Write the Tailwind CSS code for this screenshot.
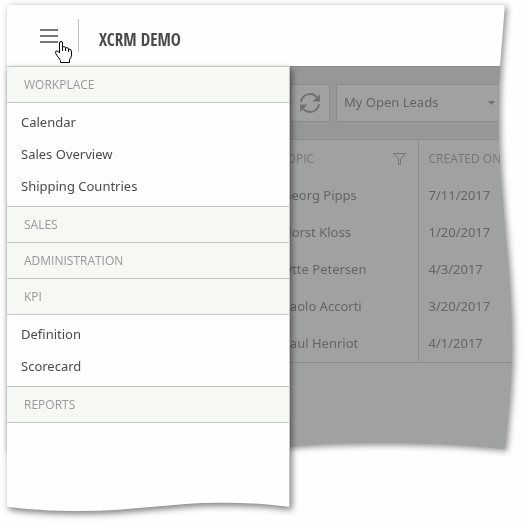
<!DOCTYPE html>
<html lang="en">
  <head>
    <meta charset="UTF-8" />
    <meta name="viewport" content="width=device-width, initial-scale=1.0" />
    <title>XCRM Demo</title>
    <script src="https://cdn.jsdelivr.net/npm/@tailwindcss/browser@4"></script>
  </head>

  <body class="bg-[#fefffd] font-['Noto_Sans','Open_Sans',sans-serif] text-[13px]">
    <!-- torn paper edges, in fractions of the clipped box -->
    <svg class="absolute" width="0" height="0" aria-hidden="true">
      <clipPath id="tornScreen" clipPathUnits="objectBoundingBox">
        <path d="M0 0H.984C.979 .08 .971 .16 .971 .24C.971 .42 .998 .58 .998 .762C.998 .85 .99 .92 .984 .996C.9 .985 .82 .982 .737 .982C.65 .982 .6 .985 .559 .99L0 1Z" />
      </clipPath>
      <clipPath id="tornMenu" clipPathUnits="objectBoundingBox">
        <path d="M0 0H1V.989C.9 .98 .82 .979 .745 .979C.6 .979 .42 .998 .26 .998C.16 .998 .06 .993 0 .988Z" />
      </clipPath>
    </svg>

    <div class="relative min-h-screen pt-[5px] pr-3 pl-[7px]">
      <div class="drop-shadow-[2px_2px_3px_rgba(0,0,0,0.45)]">
        <div class="overflow-hidden bg-[#a0a29f] [clip-path:url(#tornScreen)]">
          <header class="flex h-[61px] items-center bg-[#fefffd] pl-[33px]">
            <button type="button" aria-label="Menu" class="text-[#777]">
              <svg width="18" height="14" fill="currentColor" class="block">
                <path d="M0 0h18v2H0zM0 6h18v2H0zM0 12h18v2H0z" />
              </svg>
            </button>
            <div class="ml-5 h-[33px] w-px bg-[#c3c5c1]"></div>
            <h1 class="ml-5 mt-2 font-['Open_Sans_Condensed','Liberation_Sans_Narrow',sans-serif] text-[17px] leading-6 font-bold text-[#4a4a4a]">XCRM DEMO</h1>
          </header>

          <main class="pb-[88px] pl-[263px] text-[#646664]">
            <div class="flex h-[73px] items-center gap-1.5 border-t border-[#8b8d8a] bg-[#969895] pl-5">
              <button type="button" aria-label="Refresh" class="flex h-[38px] w-10 shrink-0 items-center justify-center rounded-xs border border-[#8b8d8a] bg-[#a0a29f] text-[#70726f]">
                <svg width="20" height="20" viewBox="0 0 20 20" fill="none" stroke="currentColor" stroke-width="2" class="block">
                  <path d="M1 9A9 9 0 0 1 17 4.500M19 11A9 9 0 0 1 3 15.500" />
                  <path d="M20 1v7.500h-7.500zM0 19v-7.500h7.500z" fill="currentColor" stroke="none" />
                </svg>
              </button>
              <div class="relative min-w-0 flex-1">
                <select aria-label="View" class="block h-[38px] w-full appearance-none rounded-xs border border-[#8b8d8a] bg-[#a0a29f] pl-[7px]">
                  <option>My Open Leads</option>
                </select>
                <svg class="pointer-events-none absolute top-[17px] right-[18px]" width="7" height="4" fill="#70726f"><path d="M0 0h7L3.500 4z" /></svg>
              </div>
            </div>

            <table class="w-full table-fixed border-collapse border-y border-[#8b8d8a]">
              <thead>
                <tr class="h-[38px] text-left text-xs text-[#757775]">
                  <th class="w-[148px] border-r border-[#8b8d8a] pr-3 pl-[10px] font-['Open_Sans',sans-serif] font-normal">
                    <span class="flex items-center justify-between">
                      TOPIC
                      <svg width="13" height="12" fill="none" stroke="currentColor"><path d="M.5 .5h12L7.500 6v5.500h-2V6z" /></svg>
                    </span>
                  </th>
                  <th class="pl-[10px] font-['Open_Sans',sans-serif] font-normal whitespace-nowrap">CREATED ON</th>
                </tr>
              </thead>
              <tbody id="leads"></tbody>
            </table>
          </main>
        </div>
      </div>

      <div class="absolute top-[66px] left-[7px] w-[283px] drop-shadow-[2px_3px_3px_rgba(0,0,0,0.5)]">
        <nav class="min-h-[446px] border-t border-r border-[#c3c5c1] bg-[#fefffd] [clip-path:url(#tornMenu)]">
          <h2 class="h-9 border-b border-[#c3c5c1] bg-[#f6f8f4] pl-[17px] font-['Open_Sans',sans-serif] text-xs leading-[35px] text-[#999]">WORKPLACE</h2>
          <ul class="border-b border-[#c3c5c1] pt-[3px] pb-1 pl-[14px] leading-8 text-[#4a4a4a]">
            <li><a href="#">Calendar</a></li>
            <li><a href="#">Sales Overview</a></li>
            <li><a href="#">Shipping Countries</a></li>
          </ul>
          <h2 class="h-9 border-b border-[#c3c5c1] bg-[#f6f8f4] pl-[17px] font-['Open_Sans',sans-serif] text-xs leading-[35px] text-[#999]">SALES</h2>
          <h2 class="h-9 border-b border-[#c3c5c1] bg-[#f6f8f4] pl-[17px] font-['Open_Sans',sans-serif] text-xs leading-[35px] text-[#999]">ADMINISTRATION</h2>
          <h2 class="h-9 border-b border-[#c3c5c1] bg-[#f6f8f4] pl-[17px] font-['Open_Sans',sans-serif] text-xs leading-[35px] text-[#999]">KPI</h2>
          <ul class="border-b border-[#c3c5c1] pt-[3px] pb-1 pl-[14px] leading-8 text-[#4a4a4a]">
            <li><a href="#">Definition</a></li>
            <li><a href="#">Scorecard</a></li>
          </ul>
          <h2 class="h-9 border-b border-[#c3c5c1] bg-[#f6f8f4] pl-[17px] font-['Open_Sans',sans-serif] text-xs leading-[35px] text-[#999]">REPORTS</h2>
        </nav>
      </div>

      <!-- hand pointer -->
      <svg class="pointer-events-none absolute top-[41px] left-[55px]" width="17" height="22" fill="#fff" stroke="#000" stroke-linejoin="round">
        <path d="M4.500 12V2Q4.500 .5 6 .5T7.500 2V6Q10 4.500 10.500 7Q13 5.500 13.500 8Q16.500 7.500 16.500 11V14Q16.500 16 14.500 18.500V21.500H5.500V19.500L1 13Q0 11 1 10Q2.500 9 4.500 12Z" />
        <path d="M7.500 6v4M10.500 7v3M13.500 8v3" fill="none" />
      </svg>
    </div>
  </body>

  <script>
    const leads = [
      ["Georg Pipps", "7/11/2017"],
      ["Horst Kloss", "1/20/2017"],
      ["Jytte Petersen", "4/3/2017"],
      ["Paolo Accorti", "3/20/2017"],
      ["Paul Henriot", "4/1/2017"],
    ];
    const tbody = document.getElementById("leads");

    leads.forEach(([topic, created]) => {
      const row = document.createElement("tr");
      row.className = "h-[37px]";
      row.innerHTML = `<td class="border-r border-[#8b8d8a] pl-3">${topic}</td><td class="pl-[10px]">${created}</td>`;
      tbody.appendChild(row);
    });
  </script>
</html>
